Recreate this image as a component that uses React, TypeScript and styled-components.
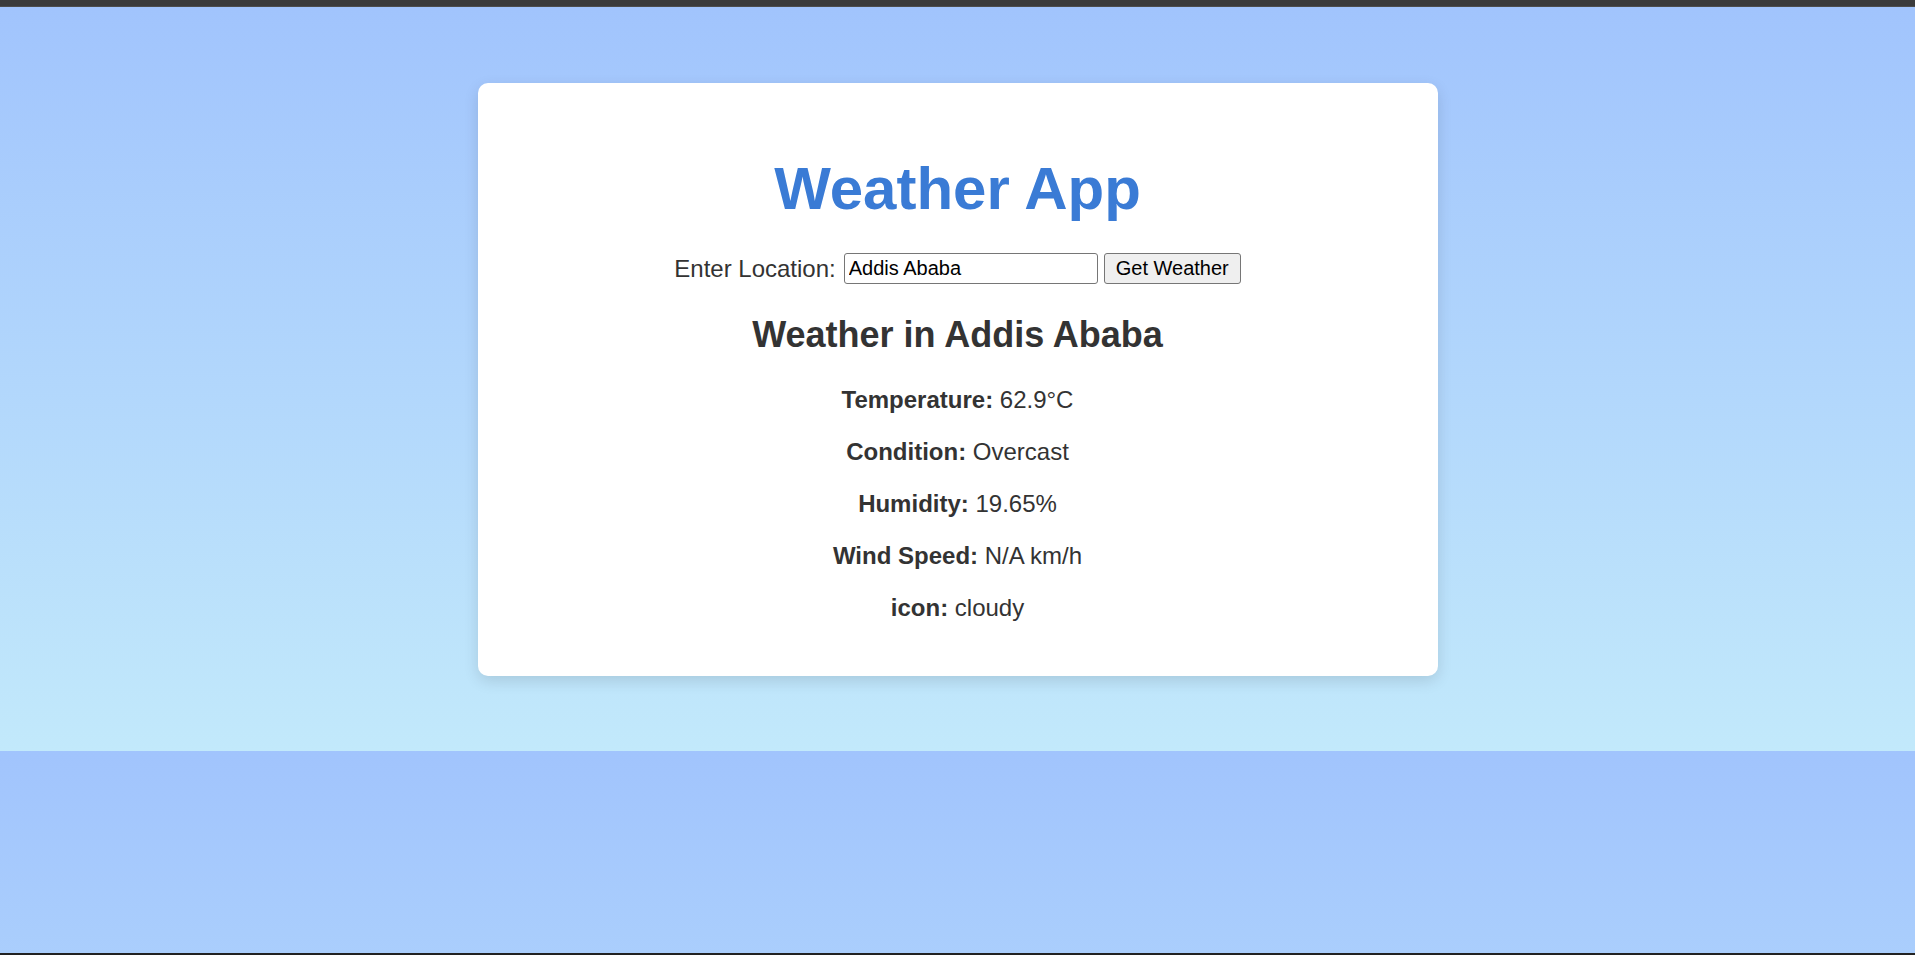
import React, { useState } from "react";
import styled, { createGlobalStyle } from "styled-components";

const GlobalStyle = createGlobalStyle`
  html, body {
    margin: 0;
    padding: 0;
    height: 100%;
  }
  body {
    font-family: "Liberation Sans", Arial, sans-serif;
    color: #333;
  }
  #root {
    height: 100%;
  }
`;

const Page = styled.div`
  display: flex;
  flex-direction: column;
  height: 100vh;
`;

const TopBar = styled.div`
  flex: none;
  height: 6px;
  background: #3b3b3b;
  border-bottom: 1px solid #4d4d4d;
`;

const Viewport = styled.main`
  flex: 1;
  min-height: 0;
  overflow: hidden;
  background-image: linear-gradient(to bottom, #a1c4fd, #c2e9fb);
  background-size: 100% 744px;
  background-repeat: repeat-y;
`;

const Scene = styled.div`
  box-sizing: border-box;
  height: 744px;
  padding: 76px 0 75px;
  display: flex;
  justify-content: center;
  align-items: flex-start;
`;

const BottomBar = styled.div`
  flex: none;
  height: 2px;
  background: #222;
`;

const Card = styled.section`
  box-sizing: border-box;
  width: 960px;
  padding: 31px 31px 30px;
  background: #fff;
  border-radius: 10px;
  box-shadow: 0 5px 15px rgba(0, 0, 0, 0.12);
  text-align: center;
`;

const Title = styled.h1`
  margin: 40px 0 30px;
  font-size: 60px;
  font-weight: 700;
  color: #3a7bd5;
  line-height: normal;
`;

const SearchRow = styled.form`
  display: flex;
  justify-content: center;
  align-items: center;
  margin: 0;
`;

const Label = styled.label`
  font-size: 24px;
  color: #333;
  margin-right: 8px;
`;

const Input = styled.input`
  box-sizing: border-box;
  width: 254px;
  height: 31px;
  padding: 2px 3px 2px 4px;
  font-family: "Liberation Sans", Arial, sans-serif;
  font-size: 20px;
  color: #000;
  border: 1px solid #767676;
  border-radius: 3px;
  background: #fff;
  outline: none;
`;

const Button = styled.button`
  box-sizing: border-box;
  height: 31px;
  width: 137px;
  margin-left: 6px;
  padding: 0 10px;
  font-family: "Liberation Sans", Arial, sans-serif;
  font-size: 20px;
  color: #000;
  background: #efefef;
  border: 1px solid #767676;
  border-radius: 3px;
  cursor: pointer;
`;

const Subtitle = styled.h2`
  margin: 30px 0;
  font-size: 36px;
  font-weight: 700;
  color: #333;
  line-height: normal;
`;

const InfoRow = styled.p`
  margin: 24px 0;
  font-size: 24px;
  color: #333;
  line-height: normal;
`;

const Key = styled.strong`
  font-weight: 700;
`;

const rows: [string, string][] = [
  ["Temperature:", "62.9°C"],
  ["Condition:", "Overcast"],
  ["Humidity:", "19.65%"],
  ["Wind Speed:", "N/A km/h"],
  ["icon:", "cloudy"],
];

export default function App() {
  const [location, setLocation] = useState("Addis Ababa");
  return (
    <>
      <GlobalStyle />
      <Page>
        <TopBar />
        <Viewport>
          <Scene>
            <Card>
              <Title>Weather App</Title>
              <SearchRow onSubmit={(e) => e.preventDefault()}>
                <Label htmlFor="loc">Enter Location:</Label>
                <Input
                  id="loc"
                  value={location}
                  onChange={(e) => setLocation(e.target.value)}
                />
                <Button type="submit">Get Weather</Button>
              </SearchRow>
              <Subtitle>Weather in Addis Ababa</Subtitle>
              {rows.map(([k, v]) => (
                <InfoRow key={k}>
                  <Key>{k}</Key> {v}
                </InfoRow>
              ))}
            </Card>
          </Scene>
        </Viewport>
        <BottomBar />
      </Page>
    </>
  );
}
